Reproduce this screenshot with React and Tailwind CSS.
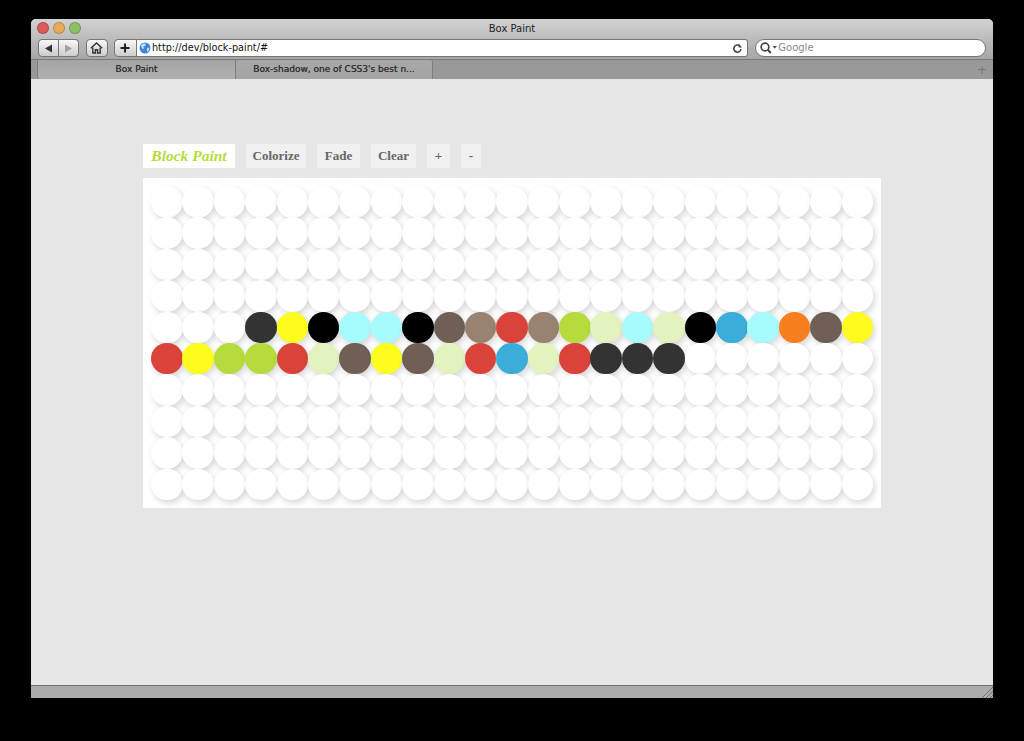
import React from 'react';

const W = 'bg-white';
const D = 'bg-[#333333]';
const Y = 'bg-[#fdfc1c]';
const K = 'bg-black';
const C = 'bg-[#a8fbfd]';
const B = 'bg-[#6f5f55]';
const T = 'bg-[#9a8270]';
const R = 'bg-[#da433a]';
const G = 'bg-[#b5dc3c]';
const L = 'bg-[#e2f3bd]';
const S = 'bg-[#3badd9]';
const O = 'bg-[#f77f1e]';

const blank = Array(23).fill(W);
const rows = [
    blank, blank, blank, blank,
    [W, W, W, D, Y, K, C, C, K, B, T, R, T, G, L, C, L, K, S, C, O, B, Y],
    [R, Y, G, G, R, L, B, Y, B, L, R, S, L, R, D, D, D, W, W, W, W, W, W],
    blank, blank, blank, blank,
];

const Light = ({ color }) => (
    <span className={`w-[12px] h-[12px] rounded-full border border-black/20 ${color}`} />
);

const ToolButton = ({ children, className }) => (
    <div className={`h-[18px] flex items-center justify-center border border-[#767676] bg-gradient-to-b from-[#f8f8f8] to-[#cdcdcd] ${className}`}>
        {children}
    </div>
);

const PaintButton = ({ children, className }) => (
    <button className={`h-[24px] flex items-center justify-center bg-[#f0f0f0] text-[#666666] font-bold text-[13px] ${className}`}>
        {children}
    </button>
);

const App = () => {
    return (
        <div className="w-[1024px] h-[741px] bg-black pt-[19px] pl-[31px] overflow-hidden font-['Liberation_Sans',sans-serif]">
            <div className="w-[962px] h-[679px] flex flex-col rounded-t-[5px] overflow-hidden bg-[#e6e6e6]">
                {/* title bar and toolbar */}
                <div className="h-[41px] shrink-0 bg-gradient-to-b from-[#d2d2d2] to-[#a6a6a6] border-b border-[#7a7a7a] flex flex-col">
                    <div className="h-[20px] shrink-0 relative flex items-center gap-[4px] pl-[6px] pb-[2px]">
                        <Light color="bg-[#dc5a5c]" />
                        <Light color="bg-[#e8ab5a]" />
                        <Light color="bg-[#8cc267]" />
                        <span className="absolute left-0 right-0 top-[3px] text-center text-[10px] leading-[14px] text-[#222222] font-['DejaVu_Sans',sans-serif]">Box Paint</span>
                    </div>
                    <div className="flex items-center pl-[7px] pr-[7px]">
                        <ToolButton className="w-[21px] rounded-l-[4px]">
                            <svg width="9" height="9" viewBox="0 0 9 9"><path d="M1 4.5 8 0.5 V8.5 Z" fill="#333333" /></svg>
                        </ToolButton>
                        <ToolButton className="w-[20px] rounded-r-[4px] border-l-0">
                            <svg width="9" height="9" viewBox="0 0 9 9"><path d="M8 4.5 1 0.5 V8.5 Z" fill="#a0a0a0" /></svg>
                        </ToolButton>
                        <ToolButton className="w-[22px] rounded-[4px] ml-[7px]">
                            <svg width="13" height="12" viewBox="0 0 13 12" fill="none" stroke="#333333" strokeWidth="1.4">
                                <path d="M0.8 6.3 6.5 1 12.2 6.3" />
                                <path d="M2.8 5.5 V11 H5.4 V7.8 H7.6 V11 H10.2 V5.5" />
                            </svg>
                        </ToolButton>
                        <ToolButton className="w-[23px] rounded-l-[4px] ml-[6px]">
                            <svg width="10" height="10" viewBox="0 0 10 10" stroke="#222222" strokeWidth="2"><path d="M5 0.5 V9.5 M0.5 5 H9.5" /></svg>
                        </ToolButton>
                        <div className="w-[612px] h-[18px] flex items-center bg-white border border-l-0 border-[#767676] rounded-r-[3px] pl-[2px] pr-[4px]">
                            <svg width="12" height="12" viewBox="0 0 12 12" className="shrink-0">
                                <circle cx="6" cy="6" r="5.5" fill="#3f83d6" />
                                <path d="M2 3.5 C3.5 1 6 1 7 2 L6 4 4.5 4.5 5 7 3 6.5 Z M8 6 L10.5 5.5 10 8.5 8 10 Z" fill="#bfe0f5" />
                            </svg>
                            <span className="ml-[1px] text-[9.7px] leading-[14px] text-[#111111] font-['DejaVu_Sans',sans-serif]">http://dev/block-paint/#</span>
                            <svg width="11" height="11" viewBox="0 0 11 11" fill="none" className="ml-auto">
                                <path d="M9 6 A3.6 3.6 0 1 1 7.8 2.9" stroke="#444444" strokeWidth="1.6" />
                                <path d="M6.6 0.6 V4.6 H10 Z" fill="#444444" />
                            </svg>
                        </div>
                        <div className="w-[231px] h-[18px] ml-[7px] flex items-center bg-white border border-[#767676] rounded-full pl-[4px]">
                            <svg width="18" height="12" viewBox="0 0 18 12" fill="none" className="shrink-0">
                                <circle cx="5" cy="5" r="3.9" stroke="#444444" strokeWidth="1.6" />
                                <path d="M7.8 7.8 10.8 11" stroke="#444444" strokeWidth="2" />
                                <path d="M12.5 4 H17 L14.75 6.8 Z" fill="#555555" />
                            </svg>
                            <span className="text-[10px] leading-[14px] text-[#8a8a8a] font-['DejaVu_Sans',sans-serif]">Google</span>
                        </div>
                    </div>
                </div>

                {/* tab bar */}
                <div className="h-[19px] shrink-0 bg-[#999999] flex pl-[6px] pr-[6px] font-['DejaVu_Sans',sans-serif]">
                    <div className="w-[199px] flex items-center justify-center bg-gradient-to-b from-[#a4a4a4] to-[#b0b0b0] border-l border-r border-[#7d7d7d] rounded-bl-[3px]">
                        <span className="text-[9px] text-[#333333] [text-shadow:0_0_0.5px_#333333]">Box Paint</span>
                    </div>
                    <div className="w-[197px] flex items-center justify-center bg-gradient-to-b from-[#a8a8a8] to-[#a4a4a4] border-r border-[#7d7d7d] rounded-tl-[4px] rounded-tr-[2px]">
                        <span className="text-[9px] text-[#333333] [text-shadow:0_0_0.5px_#333333]">Box-shadow, one of CSS3's best n...</span>
                    </div>
                    <div className="ml-auto flex items-center text-[#777777] text-[12px]">+</div>
                </div>

                {/* page */}
                <div className="flex-1 pl-[112px] pt-[65px] font-['Liberation_Serif',serif]">
                    <div className="flex gap-[11px]">
                        <button className="w-[92px] h-[24px] flex items-center justify-center bg-white text-[#b5dc3c] font-bold italic text-[15.5px]">Block Paint</button>
                        <PaintButton className="w-[60px]">Colorize</PaintButton>
                        <PaintButton className="w-[43px]">Fade</PaintButton>
                        <PaintButton className="w-[45px]">Clear</PaintButton>
                        <PaintButton className="w-[23px]">+</PaintButton>
                        <PaintButton className="w-[20px]">-</PaintButton>
                    </div>
                    <div className="mt-[10px] w-[738px] h-[330px] bg-white p-[8px] grid grid-cols-23 grid-rows-10">
                        {rows.flat().map((color, i) => (
                            <div key={i} className={`w-[31.5px] h-[31.5px] rounded-full shadow-[2px_3px_6px_rgba(0,0,0,0.16)] ${color}`} />
                        ))}
                    </div>
                </div>

                {/* status bar */}
                <div className="h-[13px] shrink-0 bg-[#ababab] border-t border-[#6f6f6f] flex justify-end items-end">
                    <svg width="11" height="11" viewBox="0 0 11 11" stroke="#707070" strokeWidth="1">
                        <path d="M0 11 11 0 M4 11 11 4 M8 11 11 8" />
                    </svg>
                </div>
            </div>
        </div>
    );
};

export default App;
